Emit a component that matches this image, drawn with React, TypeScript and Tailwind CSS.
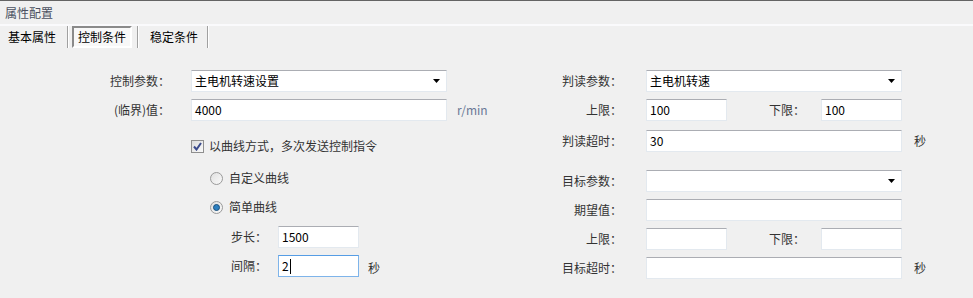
const font = { fontFamily: '"Noto Sans CJK SC", "Noto Sans", sans-serif' };

function TextBox({ value = "", width, focused = false }: { value?: string; width: string; focused?: boolean }) {
  return (
    <div
      className={`flex h-[22px] items-center bg-white px-[3px] text-[12px] text-black border ${width} ${
        focused
          ? "border-[#7eb4ea] border-t-[#569de5]"
          : "border-[#e3e9ef] border-t-[#abadb3]"
      }`}
    >
      <span>{value}</span>
      {focused && <span className="ml-[1px] h-[15px] w-px bg-black" />}
    </div>
  );
}

function Select({ value = "", width = "w-[256px]" }: { value?: string; width?: string }) {
  return (
    <div
      className={`flex h-[22px] items-center justify-between bg-white pl-[3px] pr-[4px] text-[12px] text-black border border-[#e3e9ef] border-t-[#abadb3] ${width}`}
    >
      <span>{value}</span>
      <svg width="8" height="5" viewBox="0 0 8 5" className="mr-[1px]">
        <path d="M0 0 H7 L3.5 4 Z" fill="#000" />
      </svg>
    </div>
  );
}

function Label({ text, w = "w-[70px]" }: { text: string; w?: string }) {
  return <span className={`${w} shrink-0 text-right text-[12px] text-[#333]`}>{text}</span>;
}

function Radio({ checked, label }: { checked: boolean; label: string }) {
  return (
    <div className="flex h-[18px] items-center gap-[6px]">
      <span className="flex h-[13px] w-[13px] items-center justify-center rounded-full border border-[#9a9a9a] bg-gradient-to-br from-[#e0e0e0] to-[#fafafa]">
        {checked && <span className="h-[7px] w-[7px] rounded-full border border-[#1b4f7a] bg-[#2c7fc0]" />}
      </span>
      <span className="text-[12px] text-[#333]">{label}</span>
    </div>
  );
}

function LimitRow({ upper = "", lower = "" }: { upper?: string; lower?: string }) {
  return (
    <div className="mt-[7px] flex items-center">
      <Label text="上限：" />
      <div className="ml-[24px]">
        <TextBox value={upper} width="w-[81px]" />
      </div>
      <span className="ml-[42px] w-[52px] text-[12px] text-[#333]">下限：</span>
      <TextBox value={lower} width="w-[81px]" />
    </div>
  );
}

export default function App() {
  return (
    <div className="h-[298px] w-[973px] overflow-hidden bg-[#f0f0f0]" style={font}>
      {/* ── header ── */}
      <div className="h-px bg-[#646464]" />
      <div className="flex h-[23px] items-center pl-[5px] text-[12px] text-[#4a5060]">属性配置</div>
      <div className="h-[2px] bg-[#fafafc]" />

      {/* ── tabs ── */}
      <div className="flex h-[22px] items-stretch text-[12px] text-black">
        <div className="flex w-[67px] items-center pl-[8px]">基本属性</div>
        <div className="w-[2px] border-l border-[#a0a0a0] bg-white" />
        <div className="flex w-[68px] items-center px-[3px]">
          <div className="flex h-[22px] w-[60px] items-center justify-center border-2 border-[#8a8a8a] border-r-white border-b-white bg-[#f8f8f8]">
            控制条件
          </div>
        </div>
        <div className="w-[2px] border-l border-[#a0a0a0] bg-white" />
        <div className="flex w-[68px] items-center pl-[11px]">稳定条件</div>
        <div className="w-[2px] border-l border-[#a0a0a0] bg-white" />
      </div>

      {/* ── body ── */}
      <div className="mt-[22px] flex">
        {/* left column */}
        <div className="ml-[100px] flex w-[452px] flex-col">
          <div className="flex items-center gap-[21px]">
            <Label text="控制参数：" />
            <Select value="主电机转速设置" />
          </div>
          <div className="mt-[7px] flex items-center gap-[21px]">
            <Label text="(临界)值：" />
            <TextBox value="4000" width="w-[256px]" />
            <span className="ml-[-11px] text-[12px] text-[#6a7896]">r/min</span>
          </div>
          <div className="ml-[91px] mt-[18px] flex h-[14px] items-center gap-[5px]">
            <span className="flex h-[13px] w-[13px] items-center justify-center border border-[#8f8f8f] bg-gradient-to-br from-[#dcdcdc] to-[#fafafa]">
              <svg width="9" height="9" viewBox="0 0 9 9">
                <path d="M1 4.5 L3.5 7.5 L8 1" stroke="#3b4b8c" strokeWidth="2" fill="none" />
              </svg>
            </span>
            <span className="text-[12px] text-[#333]">以曲线方式，多次发送控制指令</span>
          </div>
          <div className="ml-[110px] mt-[16px]">
            <Radio checked={false} label="自定义曲线" />
          </div>
          <div className="ml-[110px] mt-[11px]">
            <Radio checked label="简单曲线" />
          </div>
          <div className="mt-[10px] flex items-center">
            <Label text="步长：" w="w-[167px]" />
            <div className="ml-[11px]">
              <TextBox value="1500" width="w-[81px]" />
            </div>
          </div>
          <div className="mt-[7px] flex items-center">
            <Label text="间隔：" w="w-[167px]" />
            <div className="ml-[11px]">
              <TextBox value="2" width="w-[81px]" focused />
            </div>
            <span className="ml-[9px] mt-[4px] text-[12px] text-[#333]">秒</span>
          </div>
        </div>

        {/* right column */}
        <div className="flex flex-col">
          <div className="flex items-center gap-[24px]">
            <Label text="判读参数：" />
            <Select value="主电机转速" />
          </div>
          <LimitRow upper="100" lower="100" />
          <div className="mt-[9px] flex items-center gap-[24px]">
            <Label text="判读超时：" />
            <TextBox value="30" width="w-[256px]" />
            <span className="ml-[-12px] text-[12px] text-[#333]">秒</span>
          </div>
          <div className="mt-[18px] flex items-center gap-[24px]">
            <Label text="目标参数：" />
            <Select />
          </div>
          <div className="mt-[7px] flex items-center gap-[24px]">
            <Label text="期望值：" />
            <TextBox width="w-[256px]" />
          </div>
          <LimitRow />
          <div className="mt-[7px] flex items-center gap-[24px]">
            <Label text="目标超时：" />
            <TextBox width="w-[256px]" />
            <span className="ml-[-12px] text-[12px] text-[#333]">秒</span>
          </div>
        </div>
      </div>
    </div>
  );
}
